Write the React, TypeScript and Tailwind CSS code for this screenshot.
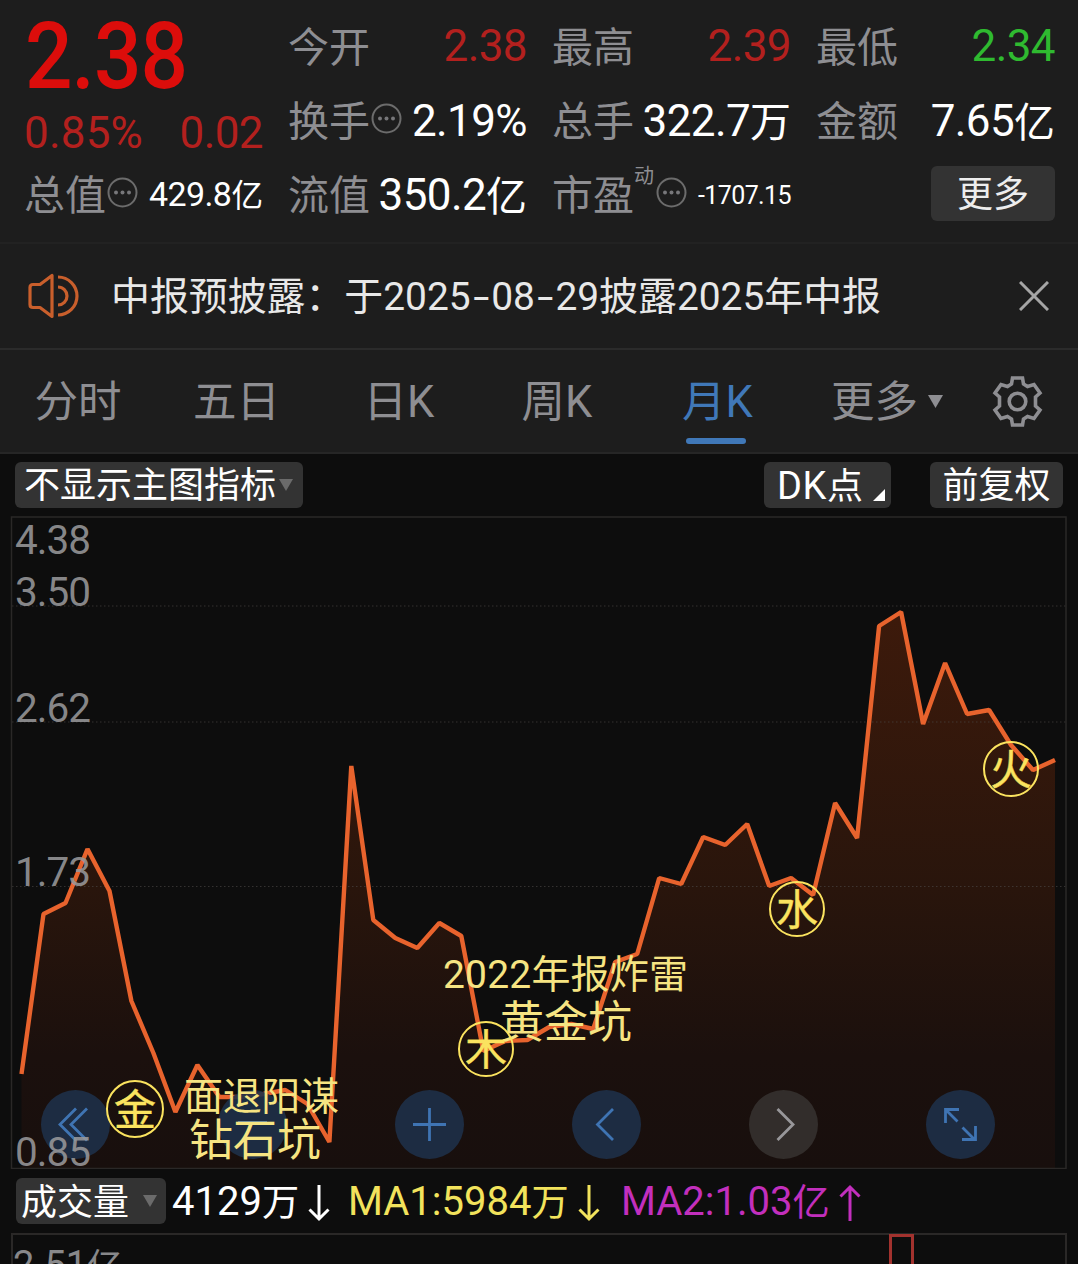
import type { ReactNode } from "react";
import clsx from "clsx";

// --- DATA ---
const prices = [
  1074, 914, 903, 849, 891, 1001, 1053, 1112, 1065, 1097, 1097, 1094, 1090, 1104, 1142, 766,
  920, 938, 948, 923, 936, 1051, 1041, 1040, 1027, 1024, 1029, 962, 954, 878, 884, 837,
  845, 824, 886, 878, 895, 803, 838, 626, 612, 724, 663, 714, 710, 745, 770, 760,
];

const axisLabels = [
  { text: "4.38", y: 554 },
  { text: "3.50", y: 606 },
  { text: "2.62", y: 722 },
  { text: "1.73", y: 886 },
  { text: "0.85", y: 1166 },
];

const marks = [
  { text: "金", x: 135, y: 1109, r: 28 },
  { text: "木", x: 486, y: 1049, r: 27 },
  { text: "水", x: 797, y: 909, r: 27 },
  { text: "火", x: 1011, y: 769, r: 27 },
];

const notes = [
  { text: "2022年报炸雷", x: 443, y: 988, width: 245, size: 39 },
  { text: "黄金坑", x: 500, y: 1038, width: 132, size: 44 },
  { text: "面退阳谋", x: 184, y: 1110, width: 155, size: 39 },
  { text: "钻石坑", x: 189, y: 1156, width: 132, size: 44 },
];

const tabs = [
  { text: "分时", box: "w-[156px]" },
  { text: "五日", box: "w-[161px]" },
  { text: "日K", box: "w-[164px]" },
  { text: "周K", box: "w-[152px]" },
  { text: "月K", box: "w-[169px]", active: true },
];

// Chinese characters sit a little smaller than the digits beside them
function Mixed({ text }: { text: string }) {
  return (
    <>
      {text.split(/([\u4e00-\u9fff]+)/).map((part, i) =>
        i % 2 ? (
          <span key={i} className="relative top-px text-[0.93em] tracking-normal">{part}</span>
        ) : (
          part
        )
      )}
    </>
  );
}

function MoreDots() {
  return (
    <svg className="mb-1 ml-px h-[31px] w-[31px] shrink-0" viewBox="0 0 31 31" fill="none">
      <circle cx="15.5" cy="15.5" r="14" stroke="#6c6c6c" strokeWidth="2" />
      <circle cx="9" cy="15.5" r="2" fill="#77777a" />
      <circle cx="15.5" cy="15.5" r="2" fill="#77777a" />
      <circle cx="22" cy="15.5" r="2" fill="#77777a" />
    </svg>
  );
}

function Stat({ label, value, info, valueClass, children }: {
  label: string;
  value: string;
  info?: boolean;
  valueClass?: string;
  children?: ReactNode;
}) {
  return (
    <div className="flex h-[74px] items-center justify-between whitespace-nowrap">
      <div className="flex items-center">
        <span className="pt-1 text-[41px] text-[#8e8e92]">{label}</span>
        {children}
        {info && <MoreDots />}
      </div>
      <span className={clsx("tracking-[-0.6px]", valueClass ?? "pt-px text-[44px] text-white")}>
        <Mixed text={value} />
      </span>
    </div>
  );
}

function Arrow({ up }: { up?: boolean }) {
  return (
    <svg className="mt-[3px] h-[38px] w-[22px]" viewBox="0 0 22 38" fill="none" stroke="currentColor" strokeWidth="3">
      <path d={up ? "M11 37V3M1.5 12.5L11 3l9.5 9.5" : "M11 1v34M1.5 25.5L11 35l9.5-9.5"} />
    </svg>
  );
}

function RoundButton({ children, gray }: { children: ReactNode; gray?: boolean }) {
  return (
    <button
      className={clsx(
        "flex h-[69px] w-[69px] items-center justify-center rounded-full",
        gray ? "bg-[#35312f]/90 text-[#98979a]" : "bg-[#1e3048]/90 text-[#3f74b3]"
      )}
    >
      <svg className="h-[69px] w-[69px]" viewBox="0 0 69 69" fill="none" stroke="currentColor" strokeWidth="2.8">
        {children}
      </svg>
    </button>
  );
}

// --- PRICE CHART ---
function PriceChart() {
  const points = prices.map((y, i) => `${(21.5 + i * 21.99).toFixed(1)},${y}`).join(" ");

  return (
    <div className="relative h-[653px]">
      <svg className="block h-[653px] w-[1078px]" viewBox="0 516 1078 653">
        <defs>
          <linearGradient id="area" gradientUnits="userSpaceOnUse" x1="0" y1="610" x2="0" y2="1168">
            <stop offset="0" stopColor="#3d1a0b" />
            <stop offset="0.5" stopColor="#29150c" />
            <stop offset="0.8" stopColor="#1b100d" />
            <stop offset="1" stopColor="#180f0d" />
          </linearGradient>
        </defs>
        <polygon points={`21.5,1168 ${points} 1055,1168`} fill="url(#area)" />
        {[606, 722, 886.5].map((y) => (
          <line key={y} x1="12" x2="1066" y1={y} y2={y} stroke="#4a4645" strokeOpacity="0.65" strokeDasharray="1.5 2.5" />
        ))}
        <rect x="11.5" y="517" width="1054.5" height="651.5" fill="none" stroke="#2a2827" strokeWidth="1.5" />
        <polyline points={points} fill="none" stroke="#e8632d" strokeWidth="4.4" strokeLinejoin="bevel" />
      </svg>

      {/* Chart tools */}
      <div className="absolute bottom-[10px] left-[41px] flex gap-[108px]">
        <RoundButton><path d="M35 18.5L19 34.5L35 50.5M46 18.5L30 34.5L46 50.5" /></RoundButton>
        <RoundButton><path d="M20 32.5H49" /></RoundButton>
        <RoundButton><path d="M18 34.5H51M34.5 18V51" /></RoundButton>
        <RoundButton><path d="M41 19L25.5 34.5L41 50" /></RoundButton>
        <RoundButton gray><path d="M28.5 19L44 34.5L28.5 50" /></RoundButton>
        <RoundButton><path d="M19.5 33V19.5H33M20 20L31.5 31.5M36.5 37.5L49 50M49.5 36V49.5H36" /></RoundButton>
      </div>

      {/* Axis values and hand-written remarks */}
      <svg className="pointer-events-none absolute inset-0 h-[653px] w-[1078px]" viewBox="0 516 1078 653">
        {axisLabels.map((label) => (
          <text key={label.text} x="15" y={label.y} fontSize="40.5" textLength="76" fill="#98989a" fillOpacity="0.88">
            {label.text}
          </text>
        ))}
        {notes.map((note) => (
          <text key={note.text} x={note.x} y={note.y} fontSize={note.size} textLength={note.width} fill="#f6e482">
            {note.text}
          </text>
        ))}
        {marks.map((mark) => (
          <g key={mark.text} stroke="#fbe35f">
            <circle cx={mark.x} cy={mark.y} r={mark.r} fill="none" strokeWidth="2" />
            <text x={mark.x} y={mark.y + 15.5} fontSize="42" textAnchor="middle" fill="#fbe35f" strokeWidth="0.4">
              {mark.text}
            </text>
          </g>
        ))}
      </svg>
    </div>
  );
}

export default function App() {
  return (
    <main className="h-[1264px] w-[1078px] overflow-hidden bg-[#0d0d0d] font-[Roboto,'Noto_Sans_CJK_SC',sans-serif] leading-none">
      {/* === QUOTE === */}
      <header className="grid h-[244px] grid-cols-[repeat(4,239px)] content-start gap-x-[25px] border-b-2 border-[#222] bg-[#1d1d1d] pt-[9px] pl-6">
        <div className="row-span-2 h-[148px]">
          <div className="h-[98px] origin-left scale-x-[0.9] pt-px pl-px text-[93px] font-medium tracking-[-1px] text-[#dc0d0b]">2.38</div>
          <div className="flex justify-between pt-[4px] text-[44px] tracking-[-0.6px] text-[#b3201e]">
            <span className="tracking-[0.2px]">0.85%</span>
            <span>0.02</span>
          </div>
        </div>
        <Stat label="今开" value="2.38" valueClass="text-[44px] text-[#b3201e]" />
        <Stat label="最高" value="2.39" valueClass="text-[44px] text-[#b3201e]" />
        <Stat label="最低" value="2.34" valueClass="text-[44px] text-[#2fba30]" />
        <Stat label="换手" value="2.19%" info />
        <Stat label="总手" value="322.7万" />
        <Stat label="金额" value="7.65亿" />
        <Stat label="总值" value="429.8亿" info valueClass="text-[34px] text-white" />
        <Stat label="流值" value="350.2亿" />
        <Stat label="市盈" value="-1707.15" info valueClass="pt-0.5 text-[25px] text-white">
          <span className="mr-px -mt-9 text-[20px] text-[#8e8e92]">动</span>
        </Stat>
        <div className="flex h-[74px] items-center justify-end">
          <button className="mb-px h-[55px] w-[124px] rounded-md bg-[#333] pt-0.5 text-[36px] text-[#ededed]">更多</button>
        </div>
      </header>

      {/* === NOTICE === */}
      <section className="flex h-[106px] items-center border-b-2 border-[#2b2b2b] bg-[#1d1d1d] pl-7">
        <svg className="h-[46px] w-[52px]" viewBox="0 0 52 46" fill="none" stroke="#c95f2c" strokeWidth="3.2" strokeLinejoin="round">
          <path d="M24 2.5V43.5L12 34.5H5Q2 34.5 2 31.5V14.5Q2 11.5 5 11.5H12Z" />
          <path d="M30 4A19 19 0 0 1 30 42M30 14A9 9 0 0 1 30 32" />
        </svg>
        <p className="ml-[31px] flex-1 pt-[3px] text-[38.9px] whitespace-nowrap text-[#e8e8e8]">
          中报预披露：于2025
          <span className="inline-block w-[20.5px] scale-x-150 text-center">-</span>08
          <span className="inline-block w-[20.5px] scale-x-150 text-center">-</span>29披露2025年中报
        </p>
        <svg className="mr-[29px] h-[30px] w-[30px]" viewBox="0 0 30 30" stroke="#a5a5a5" strokeWidth="3">
          <path d="M1 1L29 29M29 1L1 29" />
        </svg>
      </section>

      {/* === PERIOD TABS === */}
      <nav className="flex h-[104px] items-center border-b-2 border-[#262626] bg-[#1d1d1d] text-[43.5px] text-[#8e8e92]">
        {tabs.map((tab) => (
          <button key={tab.text} className={clsx("relative h-full pt-1", tab.box, tab.active && "text-[#4078b8]")}>
            {tab.text}
            {tab.active && (
              <span className="absolute bottom-[8px] left-[83px] h-1.5 w-[60px] -translate-x-1/2 rounded-full bg-[#4078b8]" />
            )}
          </button>
        ))}
        <button className="ml-[29px] flex items-center gap-[10px]">
          <span className="pt-1">更多</span>
          <svg className="h-[13px] w-[15px]" viewBox="0 0 15 13" fill="#8e8e92">
            <path d="M0 0H15L7.5 13Z" />
          </svg>
        </button>
        <svg className="ml-[48px] h-[53px] w-[53px]" viewBox="0 0 53 53" fill="none" stroke="#8e8e92" strokeWidth="3.6">
          <path d="M21.5 3H31.5L32.5 9L36.5 11.5L43 9.5L49 18L44.5 22V31L49 35L43 43.5L36.5 41.5L32.5 44L31.5 50H21.5L20.5 44L16.5 41.5L10 43.5L4 35L8.5 31V22L4 18L10 9.5L16.5 11.5L20.5 9Z" />
          <circle cx="26.5" cy="26.5" r="8.3" />
        </svg>
      </nav>

      {/* === CHART OPTIONS === */}
      <div className="flex h-[62px] items-center pr-[15px] pl-[15px] text-[36px] text-white">
        <button className="mb-px flex h-[46px] w-[288px] items-center gap-[3px] rounded-md bg-[#333] pl-[9px] whitespace-nowrap">
          <span className="pt-[3px]">不显示主图指标</span>
          <svg className="h-[12px] w-[14px]" viewBox="0 0 14 12" fill="#6b6b6b">
            <path d="M0 0H14L7 12Z" />
          </svg>
        </button>
        <button className="ml-auto flex h-[46px] w-[127px] items-center rounded-md bg-[#333] pl-[13px]">
          <span className="pt-0.5"><span className="text-[38px] tracking-[0.6px]">DK</span>点</span>
          <svg className="mt-[20px] ml-[10px] h-[12px] w-[12px]" viewBox="0 0 12 12" fill="#fff">
            <path d="M12 0V12H0Z" />
          </svg>
        </button>
        <button className="ml-[39px] h-[46px] w-[133px] rounded-md bg-[#333] pt-0.5">前复权</button>
      </div>

      <PriceChart />

      {/* === VOLUME === */}
      <div className="flex h-[64px] items-center pl-[16px] text-[40px] text-white">
        <button className="flex h-[46px] w-[150px] items-center gap-[14px] rounded-md bg-[#333] pl-[5px] text-[36px]">
          <span className="pt-[3px]">成交量</span>
          <svg className="h-[12px] w-[14px]" viewBox="0 0 14 12" fill="#6b6b6b">
            <path d="M0 0H14L7 12Z" />
          </svg>
        </button>
        <div className="ml-[6px] flex w-[176px] items-center gap-[9px]">
          <span className="pt-0.5"><Mixed text="4129万" /></span>
          <Arrow />
        </div>
        <div className="flex w-[273px] items-center gap-[9px] text-[#f2e35c]">
          <span className="pt-0.5"><Mixed text="MA1:5984万" /></span>
          <Arrow />
        </div>
        <div className="flex items-center gap-[9px] text-[#c22fbd]">
          <span className="pt-0.5"><Mixed text="MA2:1.03亿" /></span>
          <Arrow up />
        </div>
      </div>
      <div className="ml-[11px] flex h-[40px] w-[1056px] items-start justify-between border-2 border-b-0 border-[#2a2827] text-[38px] text-[#88888a]">
        <span className="pt-[11px]"><Mixed text="2.51亿" /></span>
        <span className="-mt-[1px] mr-[151px] h-[40px] w-[25px] border-[3px] border-b-0 border-[#a2322e]" />
      </div>
    </main>
  );
}
